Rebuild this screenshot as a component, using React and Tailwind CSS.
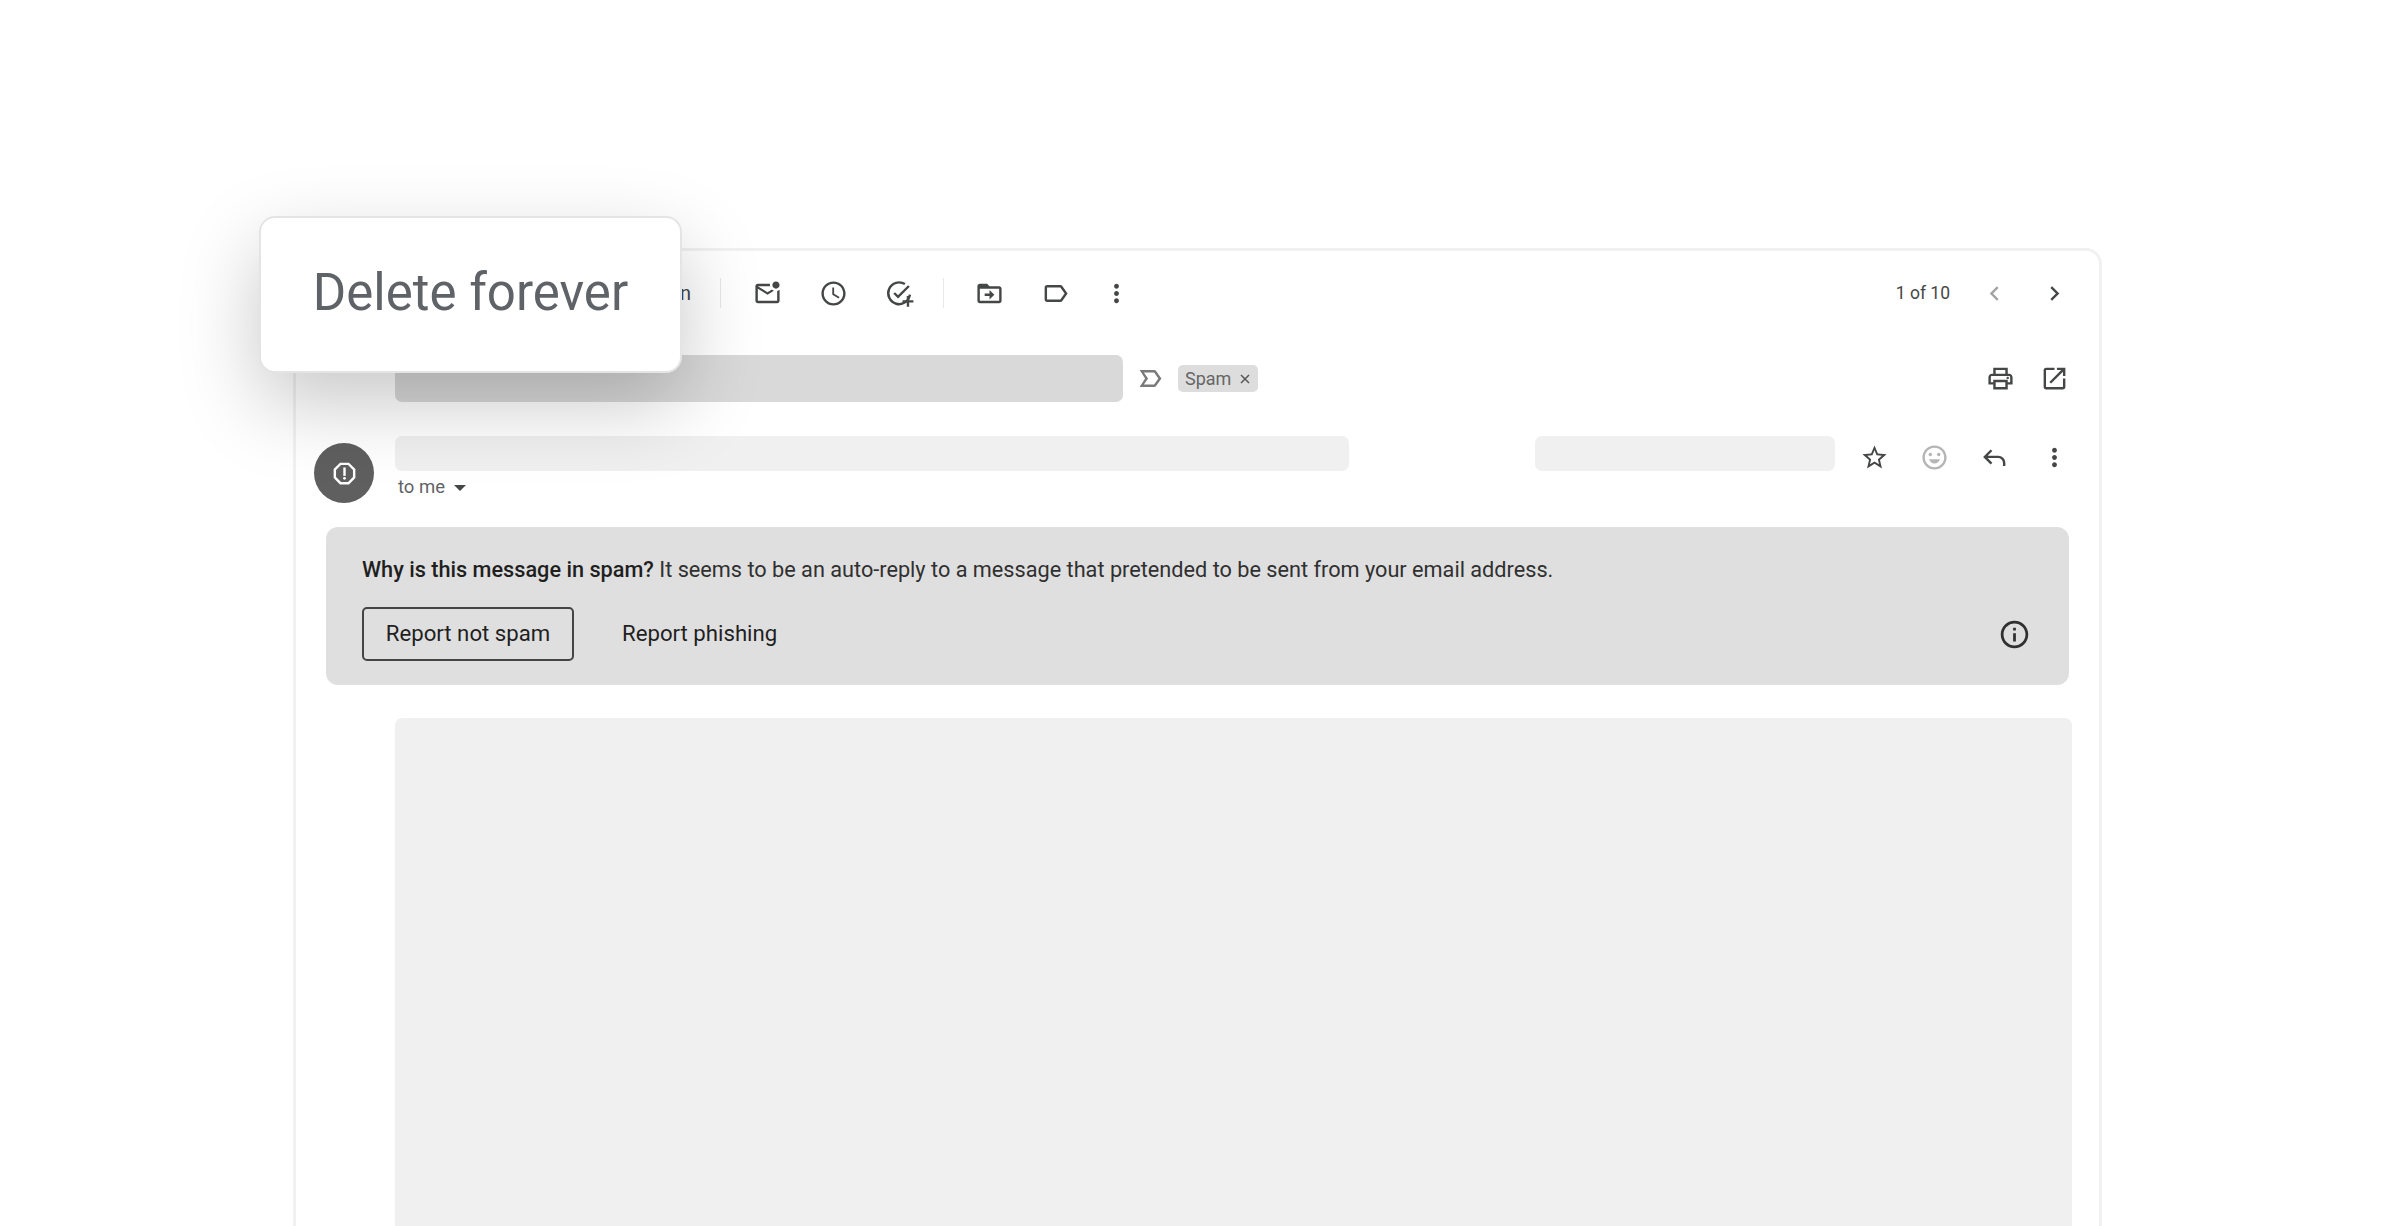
const Icon = ({ d, className = 'w-[29px] h-[29px] text-[#444746]', children }) => (
  <svg viewBox="0 0 24 24" fill="currentColor" className={className}>
    {d && <path d={d} />}
    {children}
  </svg>
)

const icons = {
  mail: 'M22 8.98V18c0 1.1-.9 2-2 2H4c-1.1 0-2-.9-2-2V6c0-1.1.9-2 2-2h10.1c-.06.32-.1.66-.1 1s.04.68.1 1H4l8 5 3.67-2.29c.47.43 1.02.76 1.63.98L12 13 4 8v10h16V9.9c.74-.15 1.42-.48 2-.92zM16 5c0 1.66 1.34 3 3 3s3-1.34 3-3-1.34-3-3-3-3 1.34-3 3z',
  clock: 'M11.99 2C6.47 2 2 6.48 2 12s4.47 10 9.99 10C17.52 22 22 17.52 22 12S17.52 2 11.99 2zM12 20c-4.42 0-8-3.58-8-8s3.58-8 8-8 8 3.58 8 8-3.58 8-8 8zm.5-13H11v6l5.25 3.15.75-1.23-4.5-2.67z',
  folder: 'M20 6h-8l-2-2H4c-1.1 0-2 .9-2 2v12c0 1.1.9 2 2 2h16c1.1 0 2-.9 2-2V8c0-1.1-.9-2-2-2zm0 12H4V8h16v10zm-8-1l4-4-4-4v3H8v2h4v3z',
  label: 'M17.63 5.84C17.27 5.33 16.67 5 16 5L5 5.01C3.9 5.01 3 5.9 3 7v10c0 1.1.9 1.99 2 1.99L16 19c.67 0 1.27-.33 1.63-.84L22 12l-4.37-6.16zM16 17H5V7h11l3.55 5L16 17z',
  more: 'M12 8c1.1 0 2-.9 2-2s-.9-2-2-2-2 .9-2 2 .9 2 2 2zm0 2c-1.1 0-2 .9-2 2s.9 2 2 2 2-.9 2-2-.9-2-2-2zm0 6c-1.1 0-2 .9-2 2s.9 2 2 2 2-.9 2-2-.9-2-2-2z',
  prev: 'M15.41 7.41L14 6l-6 6 6 6 1.41-1.41L10.83 12z',
  next: 'M10 6L8.59 7.41 13.17 12l-4.58 4.59L10 18l6-6z',
  open: 'M19 19H5V5h7V3H5c-1.11 0-2 .9-2 2v14c0 1.1.89 2 2 2h14c1.1 0 2-.9 2-2v-7h-2v7zM14 3v2h3.59l-9.83 9.83 1.41 1.41L19 6.41V10h2V3h-7z',
  star: 'M22 9.24l-7.19-.62L12 2 9.19 8.63 2 9.24l5.46 4.73L5.82 21 12 17.27 18.18 21l-1.63-7.03L22 9.24zM12 15.4l-3.76 2.27 1-4.28-3.32-2.88 4.38-.38L12 6.1l1.71 4.04 4.38.38-3.32 2.88 1 4.28L12 15.4z',
  info: 'M11 7h2v2h-2zm0 4h2v6h-2zm1-9C6.48 2 2 6.48 2 12s4.48 10 10 10 10-4.48 10-10S17.52 2 12 2zm0 18c-4.41 0-8-3.59-8-8s3.59-8 8-8 8 3.59 8 8-3.59 8-8 8z',
  important: 'M15 19H3l4.5-7L3 5h12c.65 0 1.26.31 1.63.84L21 12l-4.37 6.16c-.37.52-.98.84-1.63.84zm-8.5-2H15l3.5-5-3.5-5H6.5l3.5 5-3.5 5z',
}

const Slot = ({ className = 'w-[66px]', children }) => (
  <div className={`flex justify-center items-center shrink-0 ${className}`}>{children}</div>
)

const Divider = () => <div className="w-px h-[30px] bg-[#e8e8e8] shrink-0" />

export default function App() {
  return (
    <div className="h-[1226px] overflow-hidden bg-white pt-[248px] font-['Roboto',sans-serif] text-[#1f1f1f]">
      <div className="relative ml-[293px] w-[1809px] border-[3px] border-[#f1f1f1] rounded-t-[16px] bg-white">
        {/* floating label */}
        <div className="absolute left-[-37px] top-[-35px] z-10 w-[423px] h-[157px] pb-[2px] flex items-center justify-center bg-white border-2 border-[#e4e4e4] rounded-[16px] shadow-[0_30px_80px_rgba(0,0,0,0.22)]">
          <span className="text-[51px] font-[450] text-[#5f6368]">Delete forever</span>
        </div>

        {/* toolbar */}
        <div className="flex items-center h-[84px] pr-[15px]">
          <div className="w-[395px] text-right text-[20px] text-[#444746] shrink-0">n</div>
          <div className="w-[29px] shrink-0" />
          <Divider />
          <Slot className="w-[66px] ml-[13px]"><Icon d={icons.mail} /></Slot>
          <Slot><Icon d={icons.clock} /></Slot>
          <Slot>
            <Icon>
              <path d="M16.5 4.2A9 9 0 1 0 20.6 13" fill="none" stroke="currentColor" strokeWidth="2" />
              <path d="M7.6 11.6l3.2 3.2 9-9" fill="none" stroke="currentColor" strokeWidth="2" />
              <path d="M18 14v3.5h-3.5v2H18V23h2v-3.5h3.5v-2H20V14z" />
            </Icon>
          </Slot>
          <div className="w-[11px] shrink-0" />
          <Divider />
          <div className="w-[12px] shrink-0" />
          <Slot><Icon d={icons.folder} /></Slot>
          <Slot><Icon d={icons.label} /></Slot>
          <Slot className="w-[56px]"><Icon d={icons.more} /></Slot>
          <span className="ml-auto text-[17.5px] text-[#444746]">1 of 10</span>
          <Slot className="w-[60px] ml-[14px]"><Icon d={icons.prev} className="w-[29px] h-[29px] text-[#a3a3a3]" /></Slot>
          <Slot className="w-[60px]"><Icon d={icons.next} /></Slot>
        </div>

        {/* subject */}
        <div className="flex items-center h-[47px] mt-[20px] pl-[99px] pr-[15px]">
          <div className="w-[728px] h-full rounded-[7px] bg-[#d9d9d9] shrink-0" />
          <Slot className="w-[55px]"><Icon d={icons.important} className="w-[29px] h-[29px] text-[#7a7a7a]" /></Slot>
          <div className="flex items-center gap-[9px] h-[27px] pl-[7px] pr-[8px] rounded-[5px] bg-[#dddddd] text-[18px] text-[#666666]">
            Spam
            <svg viewBox="0 0 10 10" className="w-[10px] h-[10px] text-[#555555]" fill="none" stroke="currentColor" strokeWidth="1.5">
              <path d="M1 1l8 8M9 1l-8 8" />
            </svg>
          </div>
          <Slot className="w-[48px] ml-auto">
            <Icon>
              <path d="M19 8h-1V3H6v5H5c-1.66 0-3 1.34-3 3v6h4v4h12v-4h4v-6c0-1.66-1.34-3-3-3zM8 5h8v3H8V5zm8 12v2H8v-4h8v2zm2-2v-2H6v2H4v-4c0-.55.45-1 1-1h14c.55 0 1 .45 1 1v4h-2z" />
              <circle cx="18" cy="11.5" r="1" />
            </Icon>
          </Slot>
          <Slot className="w-[60px]"><Icon d={icons.open} /></Slot>
        </div>

        {/* sender */}
        <div className="flex mt-[34px] pr-[15px]">
          <div className="ml-[18px] mt-[7px] w-[60px] h-[60px] rounded-full bg-[#5f5f5f] flex items-center justify-center shrink-0">
            <Icon className="w-[29px] h-[29px] text-white">
              <path d="M15.73 3H8.27L3 8.27v7.46L8.27 21h7.46L21 15.73V8.27L15.73 3zM19 14.9L14.9 19H9.1L5 14.9V9.1L9.1 5h5.8L19 9.1v5.8z" />
              <circle cx="12" cy="16" r="1.2" />
              <rect x="11" y="7" width="2" height="7" />
            </Icon>
          </div>
          <div className="ml-[21px] w-[954px] shrink-0">
            <div className="h-[35px] rounded-[7px] bg-[#f0f0f0]" />
            <div className="flex items-center gap-[9px] ml-[3px] mt-[5px] h-[24px] text-[18.5px] text-[#5f6368]">
              to me
              <div className="w-0 h-0 border-x-[6px] border-x-transparent border-t-[6px] border-t-[#444746]" />
            </div>
          </div>
          <div className="ml-[186px] w-[300px] h-[35px] rounded-[7px] bg-[#f0f0f0] shrink-0" />
          <div className="flex h-[35px] ml-auto pt-[7px]">
            <Slot className="w-[60px]"><Icon d={icons.star} /></Slot>
            <Slot className="w-[60px]">
              <Icon className="w-[29px] h-[29px] text-[#b5b5b5]">
                <path d="M11.99 2C6.47 2 2 6.48 2 12s4.47 10 9.99 10C17.52 22 22 17.52 22 12S17.52 2 11.99 2zM12 20c-4.42 0-8-3.58-8-8s3.58-8 8-8 8 3.58 8 8-3.58 8-8 8z" />
                <circle cx="8.5" cy="9.5" r="1.4" />
                <circle cx="15.5" cy="9.5" r="1.4" />
                <path d="M7.5 13.5h9c-.6 2-2.4 3.5-4.5 3.5s-3.9-1.5-4.5-3.5z" />
              </Icon>
            </Slot>
            <Slot className="w-[60px]">
              <Icon>
                <path d="M9.5 6L4 11.5l5.5 5.5M4.5 11.5H15a5 5 0 0 1 5 5V19" fill="none" stroke="currentColor" strokeWidth="2" />
              </Icon>
            </Slot>
            <Slot className="w-[60px]"><Icon d={icons.more} /></Slot>
          </div>
        </div>

        {/* spam banner */}
        <div className="ml-[30px] mr-[30px] mt-[24px] h-[158px] pl-[36px] pr-[38px] pt-[27px] rounded-[12px] bg-[#dfdfdf]">
          <p className="text-[21.7px] leading-[32px] text-[#303030]">
            <span className="font-medium text-[#1f1f1f]">Why is this message in spam?</span> It seems to be an auto-reply to a message that pretended to be sent from your email address.
          </p>
          <div className="flex items-center mt-[21px]">
            <button className="w-[212px] h-[54px] rounded-[5px] border-2 border-[#444444] text-[22.2px] font-normal">Report not spam</button>
            <span className="ml-[48px] text-[22.2px]">Report phishing</span>
            <Icon d={icons.info} className="w-[33px] h-[33px] ml-auto text-[#303030]" />
          </div>
        </div>

        {/* message body */}
        <div className="ml-[99px] mr-[27px] mt-[33px] h-[600px] rounded-t-[7px] bg-[#f0f0f0]" />
      </div>
    </div>
  )
}
